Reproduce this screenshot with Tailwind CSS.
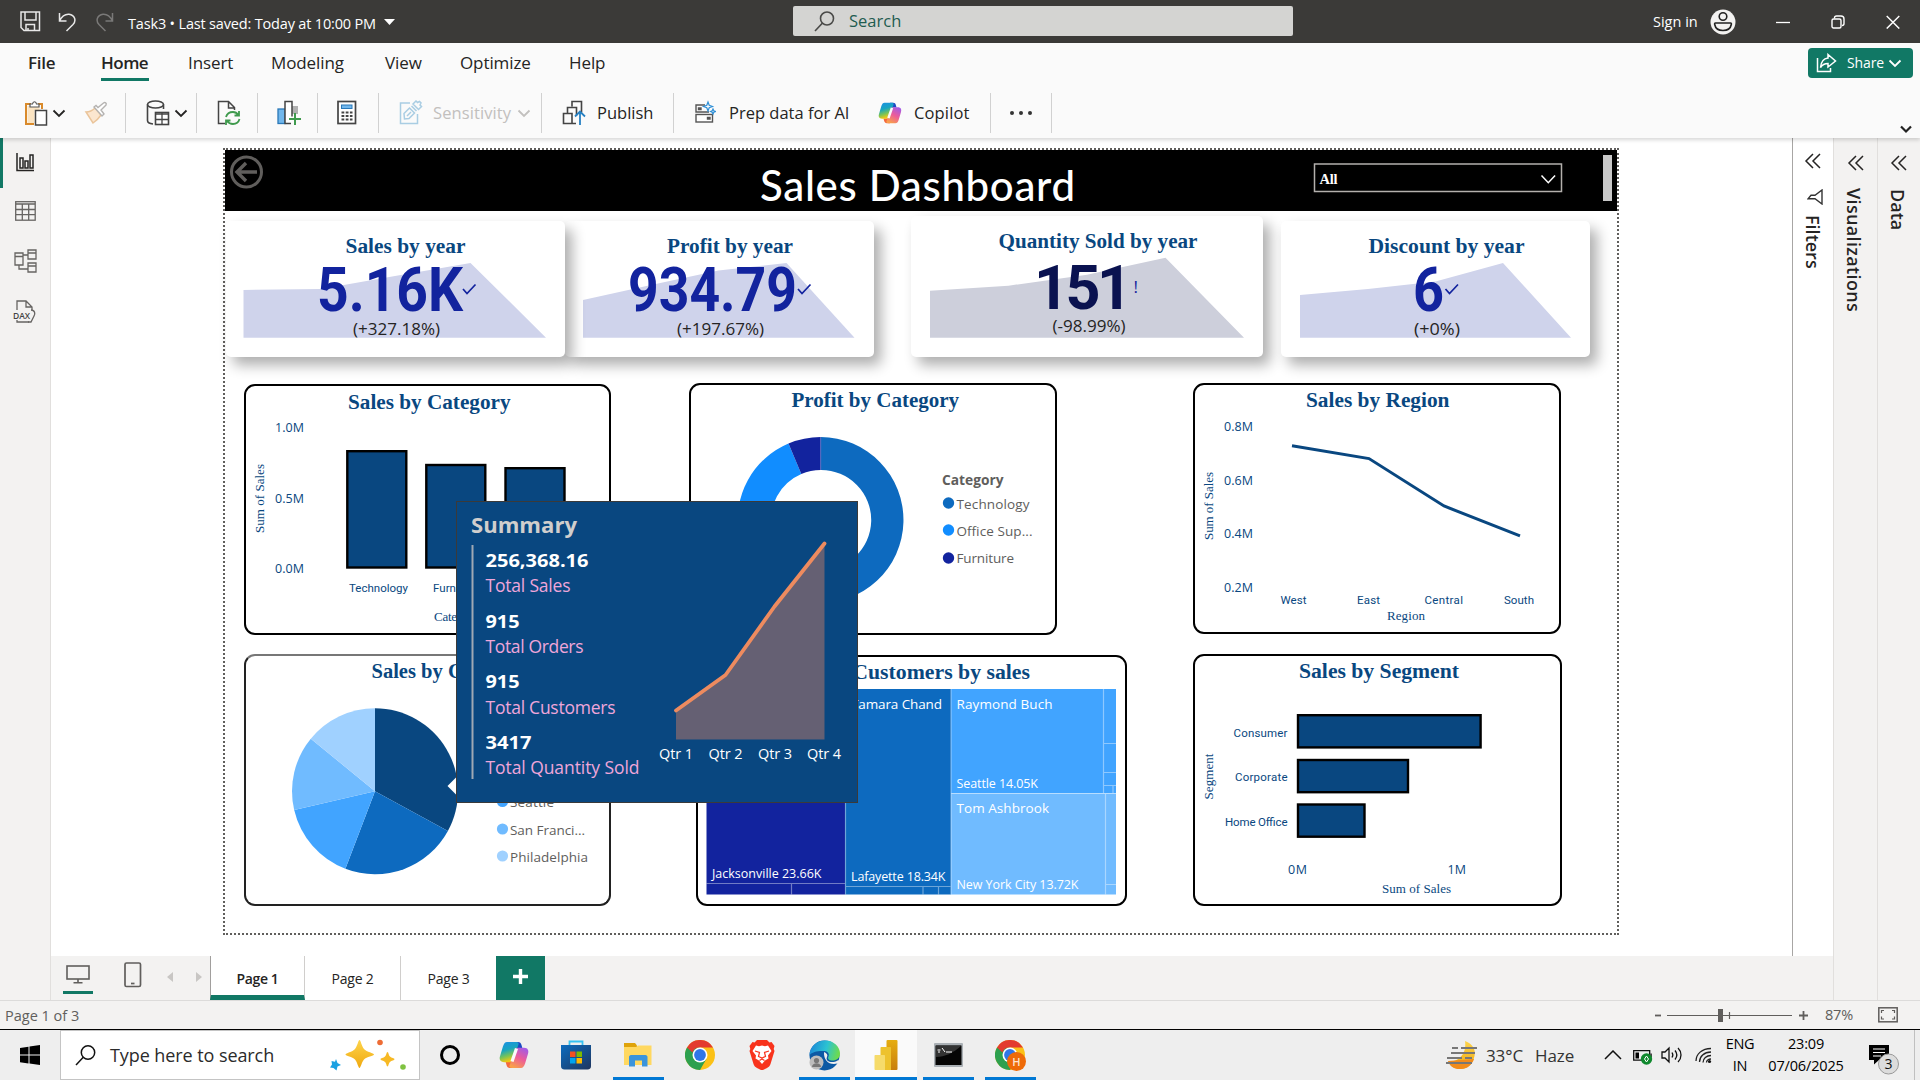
<!DOCTYPE html>
<html lang="en">
<head>
<meta charset="utf-8">
<title>Task3 - Sales Dashboard</title>
<script src="https://cdn.jsdelivr.net/npm/@tailwindcss/browser@4"></script>
</head>
<body class="w-[1920px] h-[1080px] overflow-hidden bg-white font-['Open_Sans','Noto_Sans',sans-serif] text-[#252423] flex flex-col">

<!-- shared symbols -->
<svg class="absolute w-0 h-0">
  <defs>
    <linearGradient id="cpA" x1="0" y1="0" x2="0.3" y2="1"><stop offset="0" stop-color="#1b8ee6"/><stop offset=".45" stop-color="#18a5c0"/><stop offset=".75" stop-color="#7ac455"/><stop offset="1" stop-color="#f2c811"/></linearGradient>
    <linearGradient id="cpB" x1=".8" y1="0" x2=".3" y2="1"><stop offset="0" stop-color="#a05be8"/><stop offset=".5" stop-color="#ec5b9a"/><stop offset="1" stop-color="#f9a04b"/></linearGradient>
    <linearGradient id="gold" x1="0" y1="0" x2="0" y2="1"><stop offset="0" stop-color="#fdd44c"/><stop offset="1" stop-color="#f0a90f"/></linearGradient>
    <symbol id="copilot" viewBox="0 0 30 28">
      <path d="M15 1h4c2 0 3 1 3.500 3l.8 3h-4c-2 0-3 .8-3.500 2z" fill="#1a49c4"/>
      <path d="M15 27h-4c-2 0-3-1-3.500-3l-.8-3h4c2 0 3-.8 3.500-2z" fill="#f4693c"/>
      <path d="M8 1h9c2 0 3 .8 2.500 2.500L14 18.500c-.8 2-1.800 2.700-3.500 2.700H5c-4 0-5-3-4-6l3-10C5 2.500 6 1 8 1z" fill="url(#cpA)"/>
      <path d="M22 27h-9c-2 0-3-.8-2.500-2.500L16 9.500c.8-2 1.800-2.700 3.500-2.700H25c4 0 5 3 4 6l-3 10c-1 2.700-2 4.200-4 4.200z" fill="url(#cpB)"/>
      <path d="M17.500 7.500 13 20.500" stroke="#fafafa" stroke-width="3.200"/>
    </symbol>
    <symbol id="chrome" viewBox="0 0 30 30">
      <circle cx="15" cy="15" r="15" fill="#fbc116"/>
      <path d="M2 7.500A15 15 0 0 0 15 30l6.500-11.300L15 15z" fill="#2da04e"/>
      <path d="M2 7.500 8.500 18.700 15 15V7.500H2z" fill="#2da04e"/>
      <path d="M2 7.500A15 15 0 0 1 28 7.500H15a7.500 7.500 0 0 0-7.500 5z" fill="#e33b2e"/>
      <circle cx="15" cy="15" r="7.500" fill="#fff"/><circle cx="15" cy="15" r="5.900" fill="#2f76e8"/>
    </symbol>
    <symbol id="chev" viewBox="0 0 14 9"><path d="M1.500 1.500 7 7l5.500-5.500" fill="none" stroke="currentColor" stroke-width="1.800"/></symbol>
    <symbol id="dchev" viewBox="0 0 18 16"><path d="M9 1 2 8l7 7M16 1 9 8l7 7" fill="none" stroke="currentColor" stroke-width="1.500"/></symbol>
  </defs>
</svg>

<!-- title bar -->
<header class="h-[43px] shrink-0 bg-[#3b3a38] text-white flex items-center">
  <div class="w-[128px] flex items-center pl-5">
    <svg class="w-[21px] h-[21px]" viewBox="0 0 21 21" fill="none" stroke="#e8e8e8" stroke-width="1.500"><path d="M1 1h18.500v18.500H4L1 16.500zM5 1v8h11V1M6 19.500v-6h8.500v6M8 19v-2"/></svg>
    <svg class="w-[18px] h-[20px] ml-[17px]" viewBox="0 0 18 20" fill="none" stroke="#e8e8e8" stroke-width="1.500"><path d="M1.500 1v8h7M1.500 9C4 4 7 2 11 2.300c6 .8 7.500 6.500 4 10.200L8.500 19"/></svg>
    <svg class="w-[18px] h-[20px] ml-[20px]" viewBox="0 0 18 20" fill="none" stroke="#7a7978" stroke-width="1.500"><path d="M16.500 1v8h-7M16.500 9C14 4 11 2 7 2.300 1 3.100-.5 8.800 3 12.500L9.500 19"/></svg>
  </div>
  <div class="w-[256px] pt-1 text-[14.5px] tracking-[-0.17px] whitespace-nowrap">Task3 • Last saved: Today at 10:00 PM</div>
  <svg class="w-[11px] h-[6px]" viewBox="0 0 11 6"><path d="M0 0h11L5.500 6z" fill="#fff"/></svg>
  <div class="ml-[398px] mb-px w-[500px] h-[30px] rounded-[2px] bg-[#d4d4d2] flex items-center pl-[21px] text-[#1f5c50]">
    <svg class="w-[21px] h-[21px]" viewBox="0 0 21 21" fill="none" stroke="#4a4a48" stroke-width="1.600"><circle cx="13" cy="7.500" r="6.500"/><path d="M8.500 12 1 20"/></svg>
    <span class="ml-[14px] text-[16.5px]">Search</span>
  </div>
  <div class="ml-[360px] w-[57px] text-[14.5px]">Sign in</div>
  <svg class="w-[26px] h-[26px]" viewBox="0 0 26 26"><circle cx="13" cy="13" r="12.500" fill="#f3f2f1"/><g fill="none" stroke="#222" stroke-width="1.600"><circle cx="13" cy="7.500" r="3.800"/><path d="M5.500 14h15c.8 0 1 .5.800 1.500-.7 3.700-4 6-8.300 6s-7.600-2.300-8.300-6c-.2-1 0-1.500.8-1.500z"/></g></svg>
  <svg class="w-[14px] h-[14px] ml-[40px]" viewBox="0 0 14 14"><path d="M0 7.500h14" stroke="#fff" stroke-width="1.300"/></svg>
  <svg class="w-[14px] h-[14px] ml-[41px]" viewBox="0 0 14 14" fill="none" stroke="#fff" stroke-width="1.400"><rect x="1" y="4" width="9" height="9" rx="1.500"/><path d="M3.500 3.500V3c0-1.300.7-2 2-2H10c2 0 3 1 3 3v4.500c0 1.300-.5 2-2 2"/></svg>
  <svg class="w-[14px] h-[14px] ml-[41px]" viewBox="0 0 14 14"><path d="m.7 1 12.600 12.600M13.300 1 .7 13.600" stroke="#fff" stroke-width="1.400"/></svg>
</header>

<!-- ribbon -->
<section class="h-[95px] shrink-0 bg-[#fafafa] relative z-20 shadow-[0_2px_4px_rgba(0,0,0,0.16)]">
  <div class="flex h-[50px] text-[17px] leading-6 tracking-[-0.1px]">
    <nav class="flex pl-7 pt-[8px] flex-1">
      <span class="w-[73px] font-semibold tracking-[-0.3px]">File</span>
      <span class="w-[87px] font-semibold"><span class="block w-[48px] h-[30px] border-b-[3px] border-[#117865] tracking-[-0.5px]">Home</span></span>
      <span class="w-[83px]">Insert</span>
      <span class="w-[114px]">Modeling</span>
      <span class="w-[75px]">View</span>
      <span class="w-[109px]">Optimize</span>
      <span>Help</span>
    </nav>
    <button class="mt-[5px] mr-[7px] w-[105px] h-[30px] rounded-[4px] bg-[#117865] text-white text-[14px] flex items-center pl-2">
      <svg class="w-[21px] h-[20px]" viewBox="0 0 21 20" fill="none" stroke="#fff" stroke-width="1.500"><path d="M1.500 5v13.500h13V15M12 1.500 19.500 8 12 14v-3.500c-3 0-5.500.8-7.500 4C5 9 8 5.500 12 5z"/></svg>
      <span class="ml-[10px]">Share</span>
      <svg class="w-[14px] h-[9px] ml-1"><use href="#chev"/></svg>
    </button>
  </div>
  <div class="flex h-10 items-center text-[16.5px]">
    <div class="w-[126px] h-10 border-r border-[#d1d1d1] flex items-center pl-6">
      <svg class="w-[24px] h-[26px]" viewBox="0 0 24 26" fill="none"><path d="M7 4H2v20h8" stroke="#d98a2b" stroke-width="2"/><path d="M14 4h4v5" stroke="#d98a2b" stroke-width="2"/><path d="M3.500 6h12v4h-5v13h-7z" fill="#fbe4c2"/><path d="M6 7V4h2.500C9 1 12 1 12.500 4H15v3z" fill="#fff" stroke="#555" stroke-width="1.200"/><rect x="11.500" y="10.500" width="11" height="14.500" fill="#fff" stroke="#444" stroke-width="1.500"/></svg>
      <svg class="w-[14px] h-[9px] ml-1"><use href="#chev"/></svg>
      <svg class="w-[24px] h-[24px] ml-[18px]" viewBox="0 0 24 24"><path d="M2 11c4 0 7-2 9-4l6 7c-2 3-5 6-8 8z" fill="#fbe6cf" stroke="#eac49a" stroke-width="1.500"/><path d="m10 6 8 9 2-2-3-4 5-5c1-2-1-3-2.500-2L14 6.500 12 4.500z" fill="#fff" stroke="#b5b3b1" stroke-width="1.400"/></svg>
    </div>
    <div class="w-[71px] h-10 border-r border-[#d1d1d1] flex items-center pl-5">
      <svg class="w-[24px] h-[26px]" viewBox="0 0 24 26" fill="none" stroke="#444" stroke-width="1.600"><ellipse cx="9.500" cy="4.500" rx="8" ry="3.500"/><path d="M1.500 4.500v16c0 2 2.500 3.200 5.500 3.500M17.500 4.500V9"/><rect x="9.500" y="12.500" width="13" height="12" fill="#fff"/><path d="M9.500 14h13M9.500 19.500h13M16 13v12" stroke-width="1.300"/></svg>
      <svg class="w-[14px] h-[9px] ml-1"><use href="#chev"/></svg>
    </div>
    <div class="w-[61px] h-10 border-r border-[#d1d1d1] flex items-center pl-[20px]">
      <svg class="w-[24px] h-[26px]" viewBox="0 0 24 26" fill="none"><path d="M8 23.500H1.500v-22h10l6 6V10M11.500 1.500V8h6" stroke="#444" stroke-width="1.500"/><path d="M9 17c1-3.500 4-5 7-5 2.500 0 4 1 5.500 3M22 11v4.500h-4.500M22.500 19c-1 3.500-4 5-6.500 5-3 0-4.500-1-6-3M9 25v-4.500h4.500" stroke="#3f9a4d" stroke-width="1.800"/></svg>
    </div>
    <div class="w-[60px] h-10 border-r border-[#d1d1d1] flex items-center pl-[19px]">
      <svg class="w-[24px] h-[26px]" viewBox="0 0 24 26"><rect x="1" y="9" width="7" height="14.500" fill="#71b7ec" stroke="#2a78b8" stroke-width="1.300"/><path d="M15 6h6v8h-6z" fill="#b0b0b0"/><path d="M14 23.500H8V1.500h7v15" fill="#fff" stroke="#444" stroke-width="1.500"/><path d="M18 13v12M12 19h12" stroke="#3f9a4d" stroke-width="2"/></svg>
    </div>
    <div class="w-[61px] h-10 border-r border-[#d1d1d1] flex items-center pl-[19px]">
      <svg class="w-[20px] h-[26px]" viewBox="0 0 20 26"><rect x="1" y="1.500" width="17.500" height="22" fill="#fff" stroke="#444" stroke-width="1.700"/><rect x="4.500" y="5" width="10.500" height="3.500" fill="#71b7ec" stroke="#2a78b8"/><path d="M4.500 12.500h11M4.500 16h11M4.500 19.500h11" stroke="#444" stroke-width="2.200" stroke-dasharray="2.800 1.400"/></svg>
    </div>
    <div class="w-[163px] h-10 border-r border-[#d1d1d1] flex items-center pl-5 text-[#c2c0be]">
      <svg class="w-[24px] h-[26px]" viewBox="0 0 24 26" fill="none" stroke="#a9cde3" stroke-width="1.500"><path d="M11 3H1.500v20.500h17V14"/><path d="M5 13.500 10.500 8l5 5L10 18.500l-4.500.5zM12.500 6l5 5M8 16l4-4M14 4l5.500 5.500 3-3L21 5l1-2-1.500-1.500-2 1L17 1z"/></svg>
      <span class="ml-[10px] w-[84px] tracking-[0.1px]">Sensitivity</span>
      <svg class="w-[14px] h-[9px]"><use href="#chev"/></svg>
    </div>
    <div class="w-[132px] h-10 border-r border-[#d1d1d1] flex items-center pl-5">
      <svg class="w-[24px] h-[26px]" viewBox="0 0 24 26" fill="none" stroke="#444" stroke-width="1.600"><path d="M10 6.500V1.500h9.500v11M5.500 13V7.500h9v8"/><path d="M14 23.500H1.500V13.500H10v10"/><path d="M18 25V12M13 16.500l5-5 5 5" stroke="#2680c2" stroke-width="1.800"/></svg>
      <span class="ml-[11px]">Publish</span>
    </div>
    <div class="w-[317px] h-10 border-r border-[#d1d1d1] flex items-center pl-5">
      <svg class="w-[22px] h-[26px]" viewBox="0 0 22 26" fill="none" stroke="#555" stroke-width="1.400"><path d="M11 5H2v7h13"/><rect x="2" y="14.500" width="16.500" height="7.500" fill="#fff"/><path d="M4.500 8h2.500v1.500H4.500zM13.500 17.500H16V19h-2.500z" fill="#333"/><path d="m14 2 1.200 3.300L18.500 6.500l-3.300 1.200L14 11l-1.200-3.300L9.500 6.500l3.300-1.200zM19 9l.8 1.700 1.700.8-1.700.8L19 14l-.8-1.700-1.700-.8 1.700-.8z" stroke="#2f8fd6" stroke-width="1.200" fill="#fafafa"/></svg>
      <span class="ml-[13px] w-[149px] whitespace-nowrap">Prep data for AI</span>
      <svg class="w-[24px] h-[22px]"><use href="#copilot"/></svg>
      <span class="ml-[12px] tracking-[0.15px]">Copilot</span>
    </div>
    <div class="w-[61px] h-10 border-r border-[#d1d1d1] flex items-center justify-center gap-[5px]">
      <i class="w-1 h-1 rounded-full bg-[#333]"></i><i class="w-1 h-1 rounded-full bg-[#333]"></i><i class="w-1 h-1 rounded-full bg-[#333]"></i>
    </div>
    <svg class="w-[12px] h-[9px] ml-auto mr-2 mt-8 text-[#222]" viewBox="0 0 12 9"><path d="m1 1.500 5 5 5-5" fill="none" stroke="currentColor" stroke-width="2.200"/></svg>
  </div>
</section>

<!-- workspace -->
<div class="flex h-[862px] shrink-0">
  <aside class="w-[51px] border-r border-[#e1dfdd] bg-[#f3f2f1] flex flex-col items-start">
    <div class="h-[50px] w-full border-l-[3px] border-[#117865] pl-[13px] pt-[15px]">
      <svg class="w-[18px] h-[19px]" viewBox="0 0 18 19" fill="none" stroke="#252423" stroke-width="1.500"><path d="M1 0v17.500h17"/><rect x="4" y="5" width="3" height="10"/><rect x="9" y="8" width="3" height="7"/><rect x="14" y="2" width="3" height="13"/></svg>
    </div>
    <svg class="w-[21px] h-[20px] mt-[13px] ml-[15px]" viewBox="0 0 21 20" fill="none" stroke="#666462" stroke-width="1.300"><rect x=".7" y=".7" width="19.500" height="18.500"/><path d="M1 3h19M1 8.500h19M1 13.700h19M7.300 3v16M13.700 3v16"/></svg>
    <svg class="w-[23px] h-[24px] mt-[28px] ml-[14px]" viewBox="0 0 23 24" fill="none" stroke="#666462" stroke-width="1.300"><path d="M1 4h8v12H1zM1 7.500h8M14 1h8v9h-8zM14 4h8M14 14h8v9h-8zM14 17h8M9 6h5M5 16v4h9"/></svg>
    <svg class="w-[24px] h-[24px] mt-[27px] ml-[13px]" viewBox="0 0 24 24" fill="none" stroke="#666462" stroke-width="1.300"><path d="M4 10V1h9l6 6v3M13 1v6h6M4 20v2h12"/><path d="M18 10c4 0 4.500 4 3 6l-3 6h-3" /><text x="0" y="18.500" font-size="8.500" font-weight="600" fill="#444" stroke="none" textLength="17">DAX</text></svg>
  </aside>

  <div class="w-[1782px] flex flex-col">
    <div class="h-[818px] flex">
      <main class="w-[1741px] bg-white">
        <!-- report page: visuals sit on a free canvas -->
        <div class="relative ml-[172px] mt-[10px] w-[1396px] h-[787px] border-2 border-dotted border-[#605e5c]">
          <div class="h-[61px] bg-black">
            <svg class="w-[1392px] h-[61px]" viewBox="225 150 1392 61">
              <g fill="none" stroke="#605e5c" stroke-width="3"><circle cx="246.500" cy="172" r="15"/><path d="M257 172h-19M246 163l-9 9 9 9" stroke-width="3.400"/></g>
              <text x="760" y="201" font-family="Lato, sans-serif" font-size="42" font-weight="500" fill="#fff" textLength="315">Sales Dashboard</text>
              <rect x="1314.500" y="164" width="247" height="27.500" fill="none" stroke="#b3b0ad" stroke-width="1.500"/>
              <text x="1319.500" y="184" font-family="Liberation Serif, serif" font-size="14.500" font-weight="700" fill="#fff" textLength="18">All</text>
              <path d="m1541.500 175.500 6.800 7.200 6.800-7.200" fill="none" stroke="#fff" stroke-width="1.500"/>
              <rect x="1603" y="155" width="9" height="46" fill="#c8c8c8"/>
            </svg>
          </div>

          <!-- KPI cards -->
          <div class="absolute left-[340px] top-[71px] w-[309px] h-[136px] bg-white rounded-[5px] shadow-[7px_8px_14px_rgba(0,0,0,0.32)]">
            <svg class="w-full h-full" viewBox="565 221 309 136">
              <path d="M583 300 651 285 718.500 270.500 786.500 263 854.500 337.700H583z" fill="#cfd3eb"/>
              <text x="667" y="253" font-family="Liberation Serif, serif" font-size="20" font-weight="700" fill="#094780" textLength="126" lengthAdjust="spacingAndGlyphs">Profit by year</text>
              <text x="628" y="311" font-family="Roboto, sans-serif" font-size="61" font-weight="700" fill="#12239e" textLength="169" lengthAdjust="spacingAndGlyphs">934.79</text>
              <path d="m798 289 4 4.500 8.500-9" fill="none" stroke="#12239e" stroke-width="1.700"/>
              <text x="677" y="335" font-size="16" fill="#252423" textLength="87" lengthAdjust="spacingAndGlyphs">(+197.67%)</text>
            </svg>
          </div>
          <div class="absolute left-[1px] top-[71px] w-[339px] h-[136px] bg-white rounded-[5px] shadow-[7px_8px_14px_rgba(0,0,0,0.32)]">
            <svg class="w-full h-full" viewBox="226 221 339 136">
              <path d="M243.500 290 321 289 395 276 470.500 263 546 337.700H243.500z" fill="#cfd3eb"/>
              <text x="345.500" y="253" font-family="Liberation Serif, serif" font-size="20" font-weight="700" fill="#094780" textLength="120" lengthAdjust="spacingAndGlyphs">Sales by year</text>
              <text x="317" y="311" font-family="Roboto, sans-serif" font-size="61" font-weight="700" fill="#12239e" textLength="146" lengthAdjust="spacingAndGlyphs">5.16K</text>
              <path d="m463 289 4 4.500 8.500-9" fill="none" stroke="#12239e" stroke-width="1.700"/>
              <text x="353" y="335" font-size="16" fill="#252423" textLength="87" lengthAdjust="spacingAndGlyphs">(+327.18%)</text>
            </svg>
          </div>
          <div class="absolute left-[686px] top-[66px] w-[352px] h-[141px] bg-white rounded-[5px] shadow-[7px_8px_14px_rgba(0,0,0,0.32)]">
            <svg class="w-full h-full" viewBox="911 216 352 141">
              <path d="M930 290.700 1008.500 285.700 1087 274.700 1165.500 257.700 1244 337.700H930z" fill="#cdcfdb"/>
              <text x="998.500" y="248" font-family="Liberation Serif, serif" font-size="20" font-weight="700" fill="#094780" textLength="199" lengthAdjust="spacingAndGlyphs">Quantity Sold by year</text>
              <text x="1034" y="309" font-family="Roboto, sans-serif" font-size="61" font-weight="700" fill="#0a1250" textLength="98">151</text>
              <text x="1133.500" y="293" font-size="17" fill="#12239e">!</text>
              <text x="1052.500" y="332" font-size="16" fill="#252423" textLength="73" lengthAdjust="spacingAndGlyphs">(-98.99%)</text>
            </svg>
          </div>
          <div class="absolute left-[1056px] top-[71px] w-[309px] h-[136px] bg-white rounded-[5px] shadow-[7px_8px_14px_rgba(0,0,0,0.32)]">
            <svg class="w-full h-full" viewBox="1281 221 309 136">
              <path d="M1300 295 1368 289 1435.500 281.500 1503 263 1571 337.700H1300z" fill="#cfd3eb"/>
              <text x="1368.500" y="253" font-family="Liberation Serif, serif" font-size="20" font-weight="700" fill="#094780" textLength="156" lengthAdjust="spacingAndGlyphs">Discount by year</text>
              <text x="1413" y="311" font-family="Roboto, sans-serif" font-size="61" font-weight="700" fill="#12239e" textLength="31" lengthAdjust="spacingAndGlyphs">6</text>
              <path d="m1445.500 289 4 4.500 8.500-9" fill="none" stroke="#12239e" stroke-width="1.700"/>
              <text x="1414" y="335" font-size="16" fill="#252423" textLength="46" lengthAdjust="spacingAndGlyphs">(+0%)</text>
            </svg>
          </div>

          <!-- Sales by Category -->
          <div class="absolute left-[19px] top-[234px] w-[367px] h-[251px] border-2 border-black rounded-[11px]">
            <svg class="w-full h-full" viewBox="246 386 363 247" fill="#094780">
              <text x="348" y="408.500" font-family="Liberation Serif, serif" font-size="20" font-weight="700" textLength="162.500" lengthAdjust="spacingAndGlyphs">Sales by Category</text>
              <g font-size="12.500"><text x="275" y="432" textLength="29">1.0M</text><text x="275" y="503" textLength="29">0.5M</text><text x="275" y="573" textLength="29">0.0M</text></g>
              <g stroke="#000" stroke-width="2.400"><rect x="347.300" y="451.200" width="59" height="116.300"/><rect x="426.300" y="465" width="59" height="102.500"/><rect x="505.500" y="468.200" width="59" height="99.300"/></g>
              <g font-family="Roboto, sans-serif" font-size="11.500"><text x="349" y="592" textLength="59">Technology</text><text x="433" y="592" textLength="46">Furniture</text></g>
              <g font-family="Liberation Serif, serif" font-size="13"><text x="434" y="621" textLength="46">Category</text><text transform="translate(264 533)rotate(-90)" textLength="69">Sum of Sales</text></g>
            </svg>
          </div>

          <!-- Profit by Category -->
          <div class="absolute left-[464px] top-[233px] w-[368px] h-[252px] border-2 border-black rounded-[11px]">
            <svg class="w-full h-full" viewBox="691 385 364 248">
              <text x="791.500" y="407" font-family="Liberation Serif, serif" font-size="20" font-weight="700" fill="#094780" textLength="167.500" lengthAdjust="spacingAndGlyphs">Profit by Category</text>
              <path d="M820.700 437A83 83 0 1 1 816.400 602.900L818.100 569.900A50 50 0 1 0 820.700 470z" fill="#0d6abf"/>
              <path d="M816.400 602.900A83 83 0 0 1 788.500 443.500L801.300 474A50 50 0 0 0 818.100 569.900z" fill="#118dff"/>
              <path d="M788.500 443.500A83 83 0 0 1 820.700 437V470A50 50 0 0 0 801.300 474z" fill="#12239e"/>
              <path d="M820.700 437v33" stroke="#5a6ac0"/>
              <g fill="#605e5c" font-size="13.500">
                <text x="942" y="484.500" font-weight="700" textLength="61.500" lengthAdjust="spacingAndGlyphs">Category</text>
                <text x="956.500" y="509" textLength="73">Technology</text><text x="956.500" y="536" textLength="76">Office Sup...</text><text x="956.500" y="563" textLength="57.500">Furniture</text>
              </g>
              <circle cx="948.500" cy="503" r="5.700" fill="#0d6abf"/><circle cx="948.500" cy="530" r="5.700" fill="#118dff"/><circle cx="948.500" cy="558" r="5.700" fill="#12239e"/>
            </svg>
          </div>

          <!-- Sales by Region -->
          <div class="absolute left-[968px] top-[233px] w-[368px] h-[251px] border-2 border-black rounded-[11px]">
            <svg class="w-full h-full" viewBox="1195 385 364 247" fill="#094780">
              <text x="1306" y="407" font-family="Liberation Serif, serif" font-size="20" font-weight="700" textLength="143.500" lengthAdjust="spacingAndGlyphs">Sales by Region</text>
              <g font-size="12.500"><text x="1224" y="431" textLength="29">0.8M</text><text x="1224" y="485" textLength="29">0.6M</text><text x="1224" y="538" textLength="29">0.4M</text><text x="1224" y="592" textLength="29">0.2M</text></g>
              <path d="m1292 445.800 77 12.800 75 47.400 76 29.800" fill="none" stroke="#094780" stroke-width="3"/>
              <g font-family="Roboto, sans-serif" font-size="11.500"><text x="1280.500" y="604" textLength="26">West</text><text x="1357" y="604" textLength="23">East</text><text x="1424.500" y="604" textLength="38.500">Central</text><text x="1504" y="604" textLength="30">South</text></g>
              <g font-family="Liberation Serif, serif" font-size="13"><text x="1387" y="620" textLength="38">Region</text><text transform="translate(1213 540)rotate(-90)" textLength="68">Sum of Sales</text></g>
            </svg>
          </div>

          <!-- Sales by City -->
          <div class="absolute left-[19px] top-[504px] w-[367px] h-[252px] border-2 border-[#222] border-t-[#777] rounded-[11px]">
            <svg class="w-full h-full" viewBox="246 656 363 248">
              <text x="371.500" y="678" font-family="Liberation Serif, serif" font-size="20" font-weight="700" fill="#094780" textLength="114" lengthAdjust="spacingAndGlyphs">Sales by City</text>
              <path d="M375 791.300V708.300A83 83 0 0 1 447.900 831z" fill="#094780"/>
              <path d="M375 791.300 447.900 831A83 83 0 0 1 345.400 868.800z" fill="#0d6abf"/>
              <path d="M375 791.300 345.400 868.800A83 83 0 0 1 294.200 810.100z" fill="#41a4ff"/>
              <path d="M375 791.300 294.200 810.100A83 83 0 0 1 310.800 738.700z" fill="#70bbff"/>
              <path d="M375 791.300 310.800 738.700A83 83 0 0 1 375 708.300z" fill="#a0d1ff"/>
              <path d="m447.500 786 9.500-9.500v19z" fill="#fff"/>
              <circle cx="502.500" cy="801.500" r="5.600" fill="#41a4ff"/><circle cx="502.500" cy="829" r="5.600" fill="#70bbff"/><circle cx="502.500" cy="856" r="5.600" fill="#a0d1ff"/>
              <g fill="#605e5c" font-size="13.500"><text x="510" y="807" textLength="44">Seattle</text><text x="510" y="835" textLength="75">San Franci...</text><text x="510" y="862" textLength="78">Philadelphia</text></g>
            </svg>
          </div>

          <!-- Top customers treemap -->
          <div class="absolute left-[471px] top-[505px] w-[431px] h-[251px] border-2 border-black rounded-[11px]">
            <svg class="w-full h-full" viewBox="698 657 427 247">
              <text x="795" y="679" font-family="Liberation Serif, serif" font-size="20" font-weight="700" fill="#094780" textLength="235" lengthAdjust="spacingAndGlyphs">Top 5 Customers by sales</text>
              <rect x="706.500" y="689" width="138.500" height="205.500" fill="#12239e"/><rect x="845" y="689" width="106" height="205.500" fill="#0d6abf"/>
              <rect x="951" y="689" width="165" height="104.500" fill="#41a4ff"/><rect x="951" y="793.500" width="165" height="101" fill="#70bbff"/>
              <path d="M706.500 883.500H845M791.500 883.500v11M845.500 689v205.500M845.500 886.500H951M923 886.500v8M938.500 886.500v8M951 689v205.500M951 793.500h165M1103.500 689v104.500M1103.500 743.500h12.500M1103.500 772.500h12.500M1103.500 785.500h12.500M1113 785.500v8M1105.500 793.500v101M1105.500 884.500h10.500" fill="none" stroke="#fff" stroke-opacity=".4" stroke-width="1.200"/>
              <g fill="#fff" font-size="13.500"><text x="851" y="709" textLength="91">Tamara Chand</text><text x="956.500" y="709" textLength="96">Raymond Buch</text><text x="956.500" y="813" textLength="92.500">Tom Ashbrook</text></g>
              <g fill="#fff" font-size="12.500"><text x="956.500" y="788" textLength="81.500">Seattle 14.05K</text><text x="956.500" y="889" textLength="122">New York City 13.72K</text><text x="851" y="881" textLength="94.500">Lafayette 18.34K</text><text x="712" y="878" textLength="109.500">Jacksonville 23.66K</text></g>
            </svg>
          </div>

          <!-- Sales by Segment -->
          <div class="absolute left-[968px] top-[504px] w-[369px] h-[252px] border-2 border-black rounded-[11px]">
            <svg class="w-full h-full" viewBox="1195 656 365 248" fill="#094780">
              <text x="1299" y="678" font-family="Liberation Serif, serif" font-size="20" font-weight="700" textLength="160" lengthAdjust="spacingAndGlyphs">Sales by Segment</text>
              <g stroke="#000" stroke-width="2.400"><rect x="1298" y="715.200" width="182.600" height="32.200"/><rect x="1298" y="760" width="110" height="32.200"/><rect x="1298" y="804.500" width="66.500" height="32.200"/></g>
              <g font-family="Roboto, sans-serif" font-size="11.500"><text x="1233.500" y="737" textLength="54">Consumer</text><text x="1235" y="781" textLength="52.500">Corporate</text><text x="1225" y="826" textLength="62.500">Home Office</text></g>
              <g font-size="12.500"><text x="1288" y="874" textLength="19">0M</text><text x="1447.500" y="874" textLength="18.500">1M</text></g>
              <g font-family="Liberation Serif, serif" font-size="13"><text x="1382" y="893" textLength="69">Sum of Sales</text><text transform="translate(1213 799.500)rotate(-90)" textLength="46">Segment</text></g>
            </svg>
          </div>

          <!-- hover tooltip -->
          <div class="absolute left-[231px] top-[351px] w-[402px] h-[302px] bg-[#094780] border border-[#3b3a39]">
            <svg class="w-full h-full" viewBox="457 502 400 300">
              <text x="471" y="533" font-size="22" font-weight="700" fill="#d0cecd" textLength="106" lengthAdjust="spacingAndGlyphs">Summary</text>
              <path d="M472.500 545v234" stroke="#9fa9b4" stroke-width="2"/>
              <g fill="#fff" font-size="18.500" font-weight="700"><text x="485.500" y="567" textLength="103" lengthAdjust="spacingAndGlyphs">256,368.16</text><text x="485.500" y="627.500" textLength="34" lengthAdjust="spacingAndGlyphs">915</text><text x="485.500" y="688" textLength="34" lengthAdjust="spacingAndGlyphs">915</text><text x="485.500" y="749" textLength="46" lengthAdjust="spacingAndGlyphs">3417</text></g>
              <g fill="#efa6da" font-size="17.500"><text x="485.500" y="592" textLength="85">Total Sales</text><text x="485.500" y="653" textLength="98">Total Orders</text><text x="485.500" y="713.500" textLength="130">Total Customers</text><text x="485.500" y="774" textLength="154">Total Quantity Sold</text></g>
              <path d="M676 710.500 725.500 675 774.500 606.500 824.500 543.500V739.500H676z" fill="#656073"/>
              <path d="M676 710.500 725.500 675 774.500 606.500 824.500 543.500" fill="none" stroke="#ed8b5f" stroke-width="3.800" stroke-linecap="round" stroke-linejoin="round"/>
              <g fill="#fff" font-size="14.500"><text x="659" y="759" textLength="34">Qtr 1</text><text x="708.500" y="759" textLength="34">Qtr 2</text><text x="758" y="759" textLength="34">Qtr 3</text><text x="807" y="759" textLength="34">Qtr 4</text></g>
            </svg>
          </div>
        </div>
      </main>
      <aside class="w-[41px] border-l border-[#a8a6a4] bg-white flex flex-col items-center pt-[15px]">
        <svg class="w-[18px] h-[16px]"><use href="#dchev"/></svg>
        <svg class="w-[16px] h-[16px] mt-[20px] ml-1 rotate-90" viewBox="0 0 16 16"><path d="M1 1h14L9.800 8v7L6.200 12V8z" fill="none" stroke="#333" stroke-width="1.400"/></svg>
        <span class="mt-[10px] [writing-mode:vertical-rl] text-[18px] leading-6 font-semibold">Filters</span>
      </aside>
    </div>

    <!-- page tabs -->
    <div class="h-[44px] bg-[#f3f2f1] flex text-[14px] tracking-[-0.2px]">
      <div class="w-[159px] flex items-start">
        <div class="ml-[12px] w-[30px] h-[38px] border-b-[3px] border-[#117865] flex justify-center pt-[9px]">
          <svg class="w-[24px] h-[19px]" viewBox="0 0 24 19" fill="none" stroke="#605e5c" stroke-width="1.600"><rect x="1" y="1" width="22" height="13"/><path d="M12 14v3.500M7.500 17.700h9"/></svg>
        </div>
        <svg class="w-[18px] h-[26px] ml-[31px] mt-[6px]" viewBox="0 0 18 26" fill="none" stroke="#605e5c" stroke-width="1.700"><rect x="1" y="1" width="15.500" height="23.500" rx="1.500"/><path d="M7 21.500h3.500"/></svg>
        <svg class="w-[6px] h-[10px] ml-[25px] mt-[16px]" viewBox="0 0 6 10"><path d="M6 0v10L0 5z" fill="#c8c6c4"/></svg>
        <svg class="w-[6px] h-[10px] ml-[23px] mt-[16px]" viewBox="0 0 6 10"><path d="M0 0v10l6-5z" fill="#c8c6c4"/></svg>
      </div>
      <div class="w-[95px] border-l border-r border-l-[#a19f9d] border-r-[#d0cecc] bg-white border-b-[5px] border-b-[#117865] flex items-center justify-center font-semibold tracking-[-0.4px] pt-[5px]">Page 1</div>
      <div class="w-[96px] border-r border-[#d0cecc] bg-white flex items-center justify-center pt-px">Page 2</div>
      <div class="w-[95px] bg-white flex items-center justify-center pt-px">Page 3</div>
      <div class="w-[49px] bg-[#117865] flex justify-center pt-[13px]">
        <svg class="w-[15px] h-[15px]" viewBox="0 0 15 15"><path d="M7.500 0v15M0 7.500h15" stroke="#fff" stroke-width="3.400"/></svg>
      </div>
    </div>
  </div>

  <aside class="w-[44px] border-l border-[#e1dfdd] bg-[#f3f2f1] flex flex-col items-center pt-[17px]">
    <svg class="w-[18px] h-[16px]"><use href="#dchev"/></svg>
    <span class="mt-[17px] mr-[4px] [writing-mode:vertical-rl] text-[18px] leading-6 font-semibold tracking-[0.35px]">Visualizations</span>
  </aside>
  <aside class="w-[43px] border-l border-[#e1dfdd] bg-[#f3f2f1] flex flex-col items-center pt-[17px]">
    <svg class="w-[18px] h-[16px]"><use href="#dchev"/></svg>
    <span class="mt-[18px] mr-[3px] [writing-mode:vertical-rl] text-[18px] leading-6 font-semibold">Data</span>
  </aside>
</div>

<!-- status bar -->
<footer class="h-[30px] shrink-0 border-t border-t-[#dcdbda] border-b border-b-black bg-[#f3f2f1] flex items-center text-[#605e5c] text-[14.5px] pl-[5px]">
  <span class="pt-0.5">Page 1 of 3</span>
  <div class="ml-auto flex items-center">
    <svg class="w-[156px] h-[16px]" viewBox="1654 1007 156 16" stroke="#605e5c"><path d="M1655 1015.500h6" stroke-width="1.800"/><path d="M1667 1015.500h125" stroke-width="1.200"/><path d="M1718 1009h5v13h-5z" fill="#605e5c" stroke="none"/><path d="M1729.500 1012v7" stroke-width="1.200"/><path d="M1799 1015.500h9M1803.500 1011v9" stroke-width="1.800"/></svg>
    <span class="ml-[15px] w-[53px] tracking-[-0.2px]">87%</span>
    <svg class="w-[20px] h-[16px] mr-[22px]" viewBox="0 0 20 16" fill="none" stroke="#605e5c"><rect x=".8" y=".8" width="18.400" height="14" stroke-width="1.500"/><path d="M3.500 6V3.500H6M14 3.500h2.500V6M16.500 9.500V12H14M6 12H3.500V9.500" stroke-width="1.200"/></svg>
  </div>
</footer>

<!-- taskbar -->
<div class="h-[50px] shrink-0 bg-[#eeeeee] flex text-black">
  <div class="w-[60px] flex items-center justify-center"><svg class="w-[20px] h-[20px]" viewBox="0 0 20 20"><path d="M0 3 8.500 1.700V9.500H0zM9.500 1.500 20 0v9.500H9.500zM0 10.500h8.500v8L0 17.200zM9.500 10.500H20V20L9.500 18.600z"/></svg></div>
  <div class="w-[360px] border border-[#c4c4c4] bg-white flex items-center pl-[14px] text-[18px] text-[#2b2b2b]">
    <svg class="w-[21px] h-[21px]" viewBox="0 0 21 21" fill="none" stroke="#111" stroke-width="1.500"><circle cx="13" cy="7.500" r="6.700"/><path d="M8.500 12 1 20"/></svg>
    <span class="ml-[14px] w-[220px] pt-px tracking-[-0.08px]">Type here to search</span>
    <svg class="w-[76px] h-[32px]" viewBox="331 1039 76 32"><path d="M360.500 1040c1.200 0 2 6 4.500 9s10 4 10 5.500-7.500 2-10 5-3.300 8.500-4.500 8.500-2-5.500-4.500-8.500-9.500-3.500-9.500-5 7-2.500 9.500-5.500 3.300-9 4.500-9z" fill="url(#gold)"/><path d="M388.500 1052c1 0 1 3 2.500 4.500s4.500 1.700 4.500 2.700-3 1.300-4.500 2.800-1.500 4.500-2.500 4.500-1-3-2.500-4.500-4.500-1.800-4.500-2.800 3-1.200 4.500-2.700 1.500-4.500 2.500-4.500z" fill="#f7b924"/><path d="m337 1059 1.500 4 3.500 2-3.500 1.500-1 4-3-2.500-3.500-.5 2-3-.5-3.500 3.500.8z" fill="#1ba1e2"/><circle cx="381" cy="1042.500" r="2.800" fill="#ee6c35"/><circle cx="404" cy="1067" r="2.800" fill="#7fc241"/></svg>
  </div>
  <div class="w-[63px] flex items-center justify-center"><div class="w-[20px] h-[20px] rounded-full border-[3.5px] border-black mr-[3px]"></div></div>
  <div class="w-[62px] flex items-center justify-center"><svg class="w-[30px] h-[28px]"><use href="#copilot"/></svg></div>
  <div class="w-[62px] flex items-center justify-center">
    <svg class="w-[30px] h-[30px]" viewBox="0 0 30 30"><defs><linearGradient id="st" x1="0" y1="0" x2="1" y2="1"><stop offset="0" stop-color="#0b6cbf"/><stop offset="1" stop-color="#20355e"/></linearGradient></defs><path d="M8.500 6V1.500h13V6" fill="none" stroke="#35c1f1" stroke-width="1.800"/><path d="M0 5h30v21c0 2-1 3.500-3.500 3.500h-23C1 29.500 0 28 0 26z" fill="url(#st)"/><path d="M9 11.500h5.500V17H9z" fill="#f25022"/><path d="M15.500 11.500H21V17h-5.500z" fill="#7fba00"/><path d="M9 18h5.500v5.500H9z" fill="#00a4ef"/><path d="M15.500 18H21v5.500h-5.500z" fill="#ffb900"/></svg>
  </div>
  <div class="w-[62px] flex flex-col items-center">
    <svg class="w-[28px] h-[24px] mt-[13px]" viewBox="0 0 28 24"><path d="M0 0h11l2 2.500V6H0z" fill="#dfa30a"/><path d="M0 4h12l2-1.500h13.500V22H0z" fill="#ffd860"/><path d="M5 23.500V14c0-1 .8-2 2-2h14.500c1.200 0 2 1 2 2v9.500H18v-6h-7v6z" fill="#3a94dc"/></svg>
    <i class="w-[51px] h-[3px] mt-auto bg-[#0078d4]"></i>
  </div>
  <div class="w-[62px] flex items-center justify-center"><svg class="w-[30px] h-[30px]"><use href="#chrome"/></svg></div>
  <div class="w-[62px] flex items-center justify-center">
    <svg class="w-[26px] h-[30px]" viewBox="0 0 26 30"><path d="M8 0h10l2.500 2.500 2-.5L25.500 6l-.8 3 .8 2-4 13c-.5 2-2 3-3.500 4l-5 2.500L8 28c-1.500-1-3-2-3.500-4L.5 11l.8-2L.5 6l3-4 2 .5z" fill="#f8331c"/><path d="m7 5.500 3 .8L13 5.500l3 .8 3-.8 3.500 5.500-3.500 4.500.5 3-3.500 2-3 3.500-3-3.500-3.500-2 .5-3L3.500 11z" fill="#fff"/><path d="m6 11 4.500 1.500-1 4L13 18l3.500-1.500-1-4L20 11M10.500 20.500l2.500-1.500 2.500 1.500" fill="none" stroke="#f8331c" stroke-width="1.200"/></svg>
  </div>
  <div class="w-[62px] flex flex-col items-center">
    <svg class="w-[31px] h-[31px] mt-[10px]" viewBox="0 0 31 31"><defs><linearGradient id="eg" x1="0" y1=".3" x2="1" y2=".5"><stop offset="0" stop-color="#1b87d8"/><stop offset=".55" stop-color="#2cc3d2"/><stop offset="1" stop-color="#6fdc4a"/></linearGradient></defs><circle cx="15.500" cy="15.500" r="15" fill="#0c59a4"/><path d="M.5 15C1 6 8 .5 16 .5c9 0 15 6.500 15 13 0 4.500-3.500 7-7.500 7-3 0-5.500-1.500-4-4 1-2 0-5-4-5.500C9 10.500 3 12 .5 15z" fill="url(#eg)"/><path d="M15 12c3 1 4 3 3 5-1.500 3 1.500 5 5 5 2 0 4-.5 5.500-1.500L31 20v2l-2.500 1.500c-8 2-14-2.500-13.500-11.500z" fill="#eee"/><circle cx="7.500" cy="22.500" r="7" fill="#bdbdbd"/><circle cx="7.500" cy="20.500" r="2.600" fill="#777"/><path d="M3 27c0-5 9-5 9 0z" fill="#777"/></svg>
    <i class="w-[51px] h-[3px] mt-auto bg-[#0078d4]"></i>
  </div>
  <div class="w-[62px] flex flex-col items-center bg-[#fafafa]">
    <svg class="w-[24px] h-[30px] mt-[10px]" viewBox="0 0 24 30"><defs><linearGradient id="pb" x1="0" y1="0" x2="0" y2="1"><stop offset="0" stop-color="#e6ad10"/><stop offset="1" stop-color="#c87e0e"/></linearGradient></defs><rect x="12.500" y="0" width="11" height="30" rx="1" fill="url(#pb)"/><path d="M6.500 8c0-.8.500-1 1-1H16c.8 0 1 .5 1 1v22H6.500z" fill="#edc22d"/><path d="M.5 16c0-.8.500-1 1-1H10c.8 0 1 .5 1 1v14H1.500c-.7 0-1-.5-1-1z" fill="#f6db6a"/></svg>
    <i class="w-full h-[3px] mt-auto bg-[#0078d4]"></i>
  </div>
  <div class="w-[62px] flex flex-col items-center">
    <svg class="w-[29px] h-[24px] mt-[13px]" viewBox="0 0 29 24"><rect width="29" height="24" rx="1" fill="#aab0b5"/><rect x="1.500" y="2.500" width="26" height="19.500" fill="#050505"/><path d="M2 14c9 0 17-4 25-11v-.5H2z" fill="#333"/><path d="M3.500 7h3M4 9h2M8 5l3 4M12 9h6" stroke="#fff" stroke-width="1"/></svg>
    <i class="w-[51px] h-[3px] mt-auto bg-[#0078d4]"></i>
  </div>
  <div class="w-[62px] flex flex-col items-center relative">
    <svg class="w-[30px] h-[30px] mt-[10px]"><use href="#chrome"/></svg>
    <span class="absolute left-[28px] top-[22px] w-[19px] h-[19px] rounded-full bg-[#ee6a08] text-[#fde3cf] text-[11px] font-semibold leading-[19px] text-center">H</span>
    <i class="w-[51px] h-[3px] mt-auto bg-[#0078d4]"></i>
  </div>
  <div class="ml-auto flex items-center">
    <svg class="w-[31px] h-[29px]" viewBox="0 0 31 29"><path d="M19 0c8 3 11 9 9.500 15C27 23 21 28 15 28 8 28 4 25 2 20c10 2 19-7 17-20z" fill="url(#gold)"/><path d="M2 20c2 6 7 8.500 13 8 6 0 11-4 13-10z" fill="#f28c1c"/><path d="M6 7h6M15 7h16M5 12h24M1 17h15M19 17h7M0 22h26" stroke="#777" stroke-width="2"/></svg>
    <span class="ml-[9px] w-[49px] text-[17px] pt-px tracking-[-0.1px] text-[#333]">33°C</span>
    <span class="w-[69px] text-[17px] pt-px tracking-[-0.1px] text-[#333]">Haze</span>
    <svg class="w-[18px] h-[10px]" viewBox="0 0 18 10"><path d="m1 9 8-8 8 8" fill="none" stroke="#111" stroke-width="1.500"/></svg>
    <svg class="w-[20px] h-[16px] ml-[11px] mt-1" viewBox="0 0 20 16"><path d="M.7 1.700h16v9.500H.7z" fill="none" stroke="#111" stroke-width="1.300"/><path d="M2.500 3.500H6v6H2.500z"/><path d="M17.500 4.500h1.200v4h-1.200z"/><circle cx="13.500" cy="10" r="5.700" fill="#10892e"/><path d="m13.500 7 2 3-2 3-2-3z" fill="#10892e" stroke="#fff"/></svg>
    <svg class="w-[22px] h-[18px] ml-[8px]" viewBox="0 0 22 18" fill="none" stroke="#111" stroke-width="1.300"><path d="M1 6h3l4-4v14l-4-4H1zM11 6.500c1 1.500 1 3.500 0 5M14 4.500c2.200 2.700 2.200 6.300 0 9M17 2c4 4 4 10 0 14"/></svg>
    <svg class="w-[17px] h-[17px] ml-[12px]" viewBox="0 0 17 17" fill="none" stroke="#222" stroke-width="1.300"><path d="M1 14C1 7 7 1.500 16 1.500M4.500 15C4.500 9.500 9 5 16 5M8 15.500c0-4 3.500-7 8-7"/><circle cx="14.500" cy="14.500" r="1.600" fill="#111" stroke="none"/><path d="M11.500 15.500c0-2 2-3.500 4.500-3.500"/></svg>
    <div class="ml-[10px] w-[36px] text-center text-[14.5px] leading-[22px] tracking-[-0.3px]">ENG<br>IN</div>
    <div class="ml-[4px] w-[88px] text-center text-[14.5px] leading-[22px] tracking-[-0.15px]">23:09<br>07/06/2025</div>
    <div class="relative ml-[19px] w-[46px] h-[50px] border-r border-[#c0c0c0]">
      <svg class="absolute left-0 top-[15px] w-[31px] h-[30px]" viewBox="0 0 31 30"><path d="M0 0h20v15H10l-5 4.500V15H0z"/><path d="M4 4h12M4 7.500h12M4 11h8" stroke="#fff" stroke-width="1.200"/><circle cx="19.500" cy="19" r="10" fill="#dcdcdc" stroke="#999"/><text x="15.500" y="24" font-size="14" fill="#111">3</text></svg>
    </div>
    <div class="w-[5px]"></div>
  </div>
</div>
</body>
</html>
